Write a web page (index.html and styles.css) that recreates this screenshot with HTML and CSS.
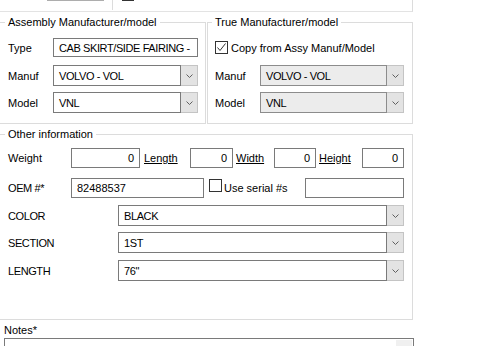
FILE: index.html
```html
<!DOCTYPE html>
<html lang="en">
<head>
    <meta charset="UTF-8">
    <meta name="viewport" content="width=device-width, initial-scale=1.0">
    <title>Part Details</title>
    <link rel="stylesheet" href="styles.css">
</head>
<body>
    <div class="form">
        <!-- Cut-off toolbar row above the groups -->
        <div class="top-strip">
            <div class="strip-left"><div class="strip-btn"></div></div>
            <div class="strip-check"></div>
        </div>

        <div class="groups">
            <fieldset class="group group-assy">
                <legend>Assembly Manufacturer/model</legend>
                <div class="field-row first">
                    <span class="label">Type</span>
                    <div class="textbox caps">CAB SKIRT/SIDE FAIRING -</div>
                </div>
                <div class="field-row second">
                    <span class="label">Manuf</span>
                    <div class="combo">
                        <div class="combo-field">VOLVO - VOL</div>
                        <div class="combo-btn"><svg width="7" height="4" viewBox="0 0 7 4"><polyline points="0.5,0.5 3.5,3.5 6.5,0.5" fill="none" stroke="#606060" stroke-width="1"/></svg></div>
                    </div>
                </div>
                <div class="field-row">
                    <span class="label">Model</span>
                    <div class="combo">
                        <div class="combo-field">VNL</div>
                        <div class="combo-btn"><svg width="7" height="4" viewBox="0 0 7 4"><polyline points="0.5,0.5 3.5,3.5 6.5,0.5" fill="none" stroke="#606060" stroke-width="1"/></svg></div>
                    </div>
                </div>
            </fieldset>

            <fieldset class="group group-true">
                <legend>True Manufacturer/model</legend>
                <div class="field-row first">
                    <span class="check"><svg width="11" height="11" viewBox="0 0 11 11"><polyline points="1.5,5.5 4,8.5 9.5,1.5" fill="none" stroke="#333" stroke-width="1"/></svg></span>
                    <span class="check-text">Copy from Assy Manuf/Model</span>
                </div>
                <div class="field-row second">
                    <span class="label">Manuf</span>
                    <div class="combo disabled">
                        <div class="combo-field">VOLVO - VOL</div>
                        <div class="combo-btn"><svg width="7" height="4" viewBox="0 0 7 4"><polyline points="0.5,0.5 3.5,3.5 6.5,0.5" fill="none" stroke="#606060" stroke-width="1"/></svg></div>
                    </div>
                </div>
                <div class="field-row">
                    <span class="label">Model</span>
                    <div class="combo disabled">
                        <div class="combo-field">VNL</div>
                        <div class="combo-btn"><svg width="7" height="4" viewBox="0 0 7 4"><polyline points="0.5,0.5 3.5,3.5 6.5,0.5" fill="none" stroke="#606060" stroke-width="1"/></svg></div>
                    </div>
                </div>
            </fieldset>
        </div>

        <fieldset class="group group-other">
            <legend>Other information</legend>
            <div class="dims-row">
                <span class="label">Weight</span>
                <div class="textbox num">0</div>
                <span class="label link pad4">Length</span>
                <div class="textbox num">0</div>
                <span class="label link pad3">Width</span>
                <div class="textbox num">0</div>
                <span class="label link pad3">Height</span>
                <div class="textbox num">0</div>
            </div>
            <div class="oem-row">
                <span class="label oem-label caps">OEM #*</span>
                <div class="textbox oem-box">82488537</div>
                <div class="serial">
                    <span class="check"></span>
                    <span class="check-text">Use serial #s</span>
                </div>
                <div class="textbox serial-box"></div>
            </div>
            <div class="attr-row color-row">
                <span class="label attr-label caps">COLOR</span>
                <div class="combo">
                    <div class="combo-field">BLACK</div>
                    <div class="combo-btn"><svg width="7" height="4" viewBox="0 0 7 4"><polyline points="0.5,0.5 3.5,3.5 6.5,0.5" fill="none" stroke="#606060" stroke-width="1"/></svg></div>
                </div>
            </div>
            <div class="attr-row section-row">
                <span class="label attr-label caps">SECTION</span>
                <div class="combo">
                    <div class="combo-field">1ST</div>
                    <div class="combo-btn"><svg width="7" height="4" viewBox="0 0 7 4"><polyline points="0.5,0.5 3.5,3.5 6.5,0.5" fill="none" stroke="#606060" stroke-width="1"/></svg></div>
                </div>
            </div>
            <div class="attr-row length-row">
                <span class="label attr-label caps">LENGTH</span>
                <div class="combo">
                    <div class="combo-field">76"</div>
                    <div class="combo-btn"><svg width="7" height="4" viewBox="0 0 7 4"><polyline points="0.5,0.5 3.5,3.5 6.5,0.5" fill="none" stroke="#606060" stroke-width="1"/></svg></div>
                </div>
            </div>
        </fieldset>

        <div class="notes-label">Notes*</div>
        <div class="notes-box">
            <div class="scroll-track"></div>
        </div>
    </div>
</body>
</html>
```

FILE: styles.css
```css
html, body {
    overflow: hidden;
}
body {
    margin: 0;
    background: #fff;
    color: #000;
    font-family: "Liberation Sans", Arial, sans-serif;
    font-size: 11px;
}
.form {
    width: 413px;
}

/* upper-case text is set a little tighter, like the original UI font */
.caps,
.combo-field {
    letter-spacing: -0.4px;
}

/* top strip (cut off by the window) */
.top-strip {
    display: flex;
    align-items: flex-start;
    height: 11px;
    border-bottom: 1px solid #e3e3e3;
    border-right: 1px solid #dcdcdc;
}
.strip-left {
    width: 112px;
    height: 10px;
    border-right: 1px solid #dcdcdc;
}
.strip-btn {
    margin-left: 47px;
    width: 57px;
    height: 1px;
    background: #adadad;
}
.strip-check {
    margin-left: 9px;
    width: 12px;
    height: 1px;
    background: #333;
}

/* group boxes */
.groups {
    display: flex;
    gap: 1px;
    margin-top: 4px;
}
.group {
    margin: 0;
    min-width: 0;
    box-sizing: border-box;
    border: 1px solid #dcdcdc;
}
.group legend {
    margin-left: -3px;
    padding: 0 3px;
    line-height: 13px;
}
.group-assy {
    width: 206px;
    border-left: none;
    padding: 9px 7px 10px 8px;
}
.group-true {
    width: 206px;
    padding: 9px 8px 10px 7px;
}
.group-other {
    width: 413px;
    margin-top: 4px;
    border-left: none;
    padding: 7px 8px 38px 8px;
}

.field-row {
    display: flex;
    align-items: center;
    height: 21px;
    margin-top: 6px;
}
.field-row.first {
    height: 19px;
    margin-top: 0;
}
.field-row.second {
    margin-top: 8px;
}
.field-row .label {
    width: 45px;
    flex: none;
}

.label {
    white-space: nowrap;
}
.label.link {
    text-decoration: underline;
}
.pad4 {
    padding-left: 4px;
}
.pad3 {
    padding-left: 3px;
}

.textbox {
    flex: 1;
    box-sizing: border-box;
    height: 100%;
    display: flex;
    align-items: center;
    padding: 0 5px;
    border: 1px solid #7a7a7a;
    background: #fff;
    white-space: nowrap;
    overflow: hidden;
}
.textbox.num {
    justify-content: flex-end;
}

.combo {
    flex: 1;
    display: flex;
    height: 100%;
}
.combo-field {
    flex: 1;
    box-sizing: border-box;
    display: flex;
    align-items: center;
    padding: 0 5px;
    border: 1px solid #7a7a7a;
    background: #fff;
    white-space: nowrap;
    overflow: hidden;
}
.combo.disabled .combo-field {
    background: #ececec;
    border-color: #8c8c8c;
}
.combo-btn {
    width: 17px;
    flex: none;
    box-sizing: border-box;
    display: flex;
    align-items: center;
    justify-content: center;
    border: 1px solid #c4c4c4;
    border-left: none;
    background: #e3e3e3;
}

.check {
    width: 13px;
    height: 13px;
    flex: none;
    box-sizing: border-box;
    border: 1px solid #333;
    background: #fff;
    display: flex;
}
.check-text {
    margin-left: 3px;
    white-space: nowrap;
}

/* other information rows */
.dims-row {
    display: grid;
    grid-template-columns: 63px 69px 50px 43px 41px 42px 46px 42px;
    align-items: center;
    height: 20px;
}
.oem-row {
    display: flex;
    align-items: center;
    height: 20px;
    margin-top: 10px;
}
.oem-label {
    width: 63px;
}
.oem-box {
    flex: none;
    width: 133px;
}
.serial {
    width: 101px;
    display: flex;
    align-items: center;
    padding-left: 5px;
    box-sizing: border-box;
}
.serial .check {
    margin-bottom: 5px;
}
.serial .check-text {
    margin-left: 2px;
}
.serial-box {
    flex: none;
    width: 99px;
}

.attr-row {
    display: flex;
    align-items: center;
    height: 21px;
}
.color-row {
    margin-top: 7px;
}
.section-row {
    margin-top: 6px;
}
.length-row {
    margin-top: 7px;
}
.attr-label {
    width: 110px;
    flex: none;
}

/* notes */
.notes-label {
    margin-top: 4px;
    padding-left: 4px;
    line-height: 13px;
}
.notes-box {
    margin-top: 1px;
    margin-left: 4px;
    width: 410px;
    height: 60px;
    box-sizing: border-box;
    border: 1px solid #7a7a7a;
    display: flex;
    justify-content: flex-end;
    padding: 1px;
}
.scroll-track {
    width: 16px;
    background: #f0f0f0;
}
```
